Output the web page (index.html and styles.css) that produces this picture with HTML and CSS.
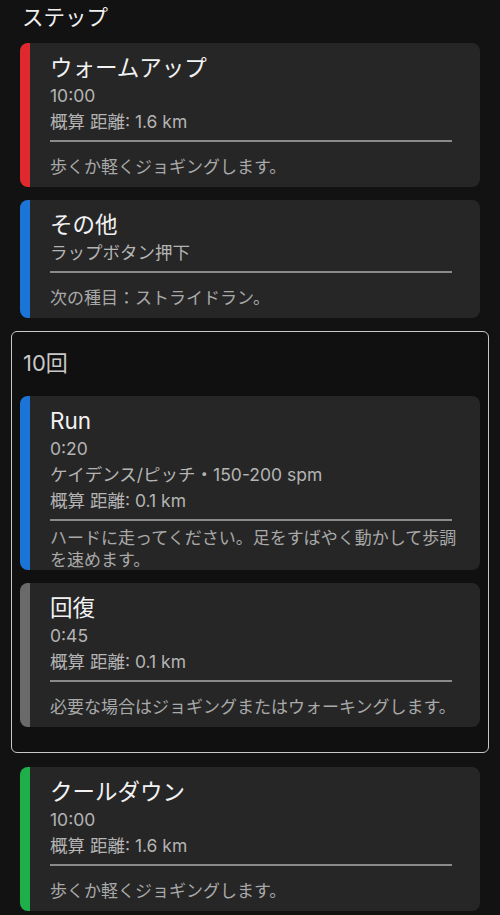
FILE: index.html
```html
<!DOCTYPE html>
<html lang="ja">
<head>
  <meta charset="UTF-8" />
  <meta name="viewport" content="width=device-width, initial-scale=1.0"/>
  <title>ステップ</title>
  <link rel="stylesheet" href="styles.css">
</head>
<body>
  <h2 class="section-title">ステップ</h2>

  <div class="step">
    <div class="bar red"></div>
    <div class="step-body">
      <div class="step-name">ウォームアップ</div>
      <div class="sub">10:00</div>
      <div class="sub">概算 距離: 1.6 km</div>
      <div class="divider"></div>
      <div class="desc">歩くか軽くジョギングします。</div>
    </div>
  </div>

  <div class="step">
    <div class="bar blue"></div>
    <div class="step-body">
      <div class="step-name">その他</div>
      <div class="sub">ラップボタン押下</div>
      <div class="divider"></div>
      <div class="desc">次の種目：ストライドラン。</div>
    </div>
  </div>

  <div class="repeat">
    <div class="repeat-label">10回</div>

    <div class="step">
      <div class="bar blue"></div>
      <div class="step-body">
        <div class="step-name">Run</div>
        <div class="sub">0:20</div>
        <div class="sub">ケイデンス/ピッチ・150-200 spm</div>
        <div class="sub">概算 距離: 0.1 km</div>
        <div class="divider"></div>
        <div class="desc long">ハードに走ってください。足をすばやく動かして歩調<br>を速めます。</div>
      </div>
    </div>

    <div class="step">
      <div class="bar gray"></div>
      <div class="step-body">
        <div class="step-name">回復</div>
        <div class="sub">0:45</div>
        <div class="sub">概算 距離: 0.1 km</div>
        <div class="divider"></div>
        <div class="desc">必要な場合はジョギングまたはウォーキングします。</div>
      </div>
    </div>
  </div>

  <div class="step">
    <div class="bar green"></div>
    <div class="step-body">
      <div class="step-name">クールダウン</div>
      <div class="sub">10:00</div>
      <div class="sub">概算 距離: 1.6 km</div>
      <div class="divider"></div>
      <div class="desc">歩くか軽くジョギングします。</div>
    </div>
  </div>
</body>
</html>
```

FILE: styles.css
```css
body {
  font-family: Inter, "Noto Sans CJK JP", sans-serif;
  background: #121212;
  color: #f0f0f0;
  margin: 0;
  padding: 0 20px;
}
.section-title {
  font-size: 21.5px;
  font-weight: normal;
  line-height: 34px;
  margin: 0 0 9px;
  padding-left: 2px;
}
.step {
  display: flex;
  background: #262626;
  border-radius: 8px;
  overflow: hidden;
  margin-bottom: 13px;
}
.bar {
  width: 10px;
  flex-shrink: 0;
}
.red { background: #e0292e; }
.blue { background: #1b74d8; }
.gray { background: #6a6a6a; }
.green { background: #1eae4a; }
.step-body {
  flex: 1;
  padding: 10px 18px 8px 20px;
}
.step-name {
  font-size: 22.5px;
  line-height: 30px;
  color: #f2f2f2;
}
.sub {
  font-size: 17.5px;
  line-height: 26px;
  color: #b4b4b4;
}
.divider {
  height: 2px;
  background: #8a8a8a;
  margin: 5px 10px 0 0;
}
.desc {
  font-size: 17px;
  line-height: 24px;
  color: #a9a9a9;
  margin-top: 13px;
}
.desc.long {
  line-height: 22px;
  margin-top: 6px;
  margin-bottom: -9px;
}
.repeat {
  margin: 0 -9px 14px;
  padding: 0 8px 12px;
  border: 1px solid #c8c8c8;
  border-radius: 6px;
  background: #101010;
}
.repeat-label {
  font-size: 22px;
  line-height: 32px;
  color: #c8c8c8;
  padding: 15px 3px 17px;
}
```
